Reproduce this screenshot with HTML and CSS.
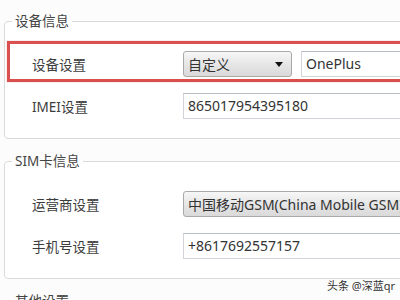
FILE: index.html
```html
<!DOCTYPE html>
<html lang="zh-CN">
<head>
  <meta charset="UTF-8">
  <title>设备信息</title>
  <link rel="stylesheet" href="styles.css">
</head>
<body>

  <div class="panel">
    <fieldset class="group">
      <legend>设备信息</legend>
      <div class="row marked">
        <label>设备设置</label>
        <div class="combo short"><span>自定义</span><i class="arrow"></i></div>
        <div class="field model">OnePlus</div>
      </div>
      <div class="row">
        <label>IMEI设置</label>
        <div class="field wide">865017954395180</div>
      </div>
    </fieldset>

    <fieldset class="group">
      <legend>SIM卡信息</legend>
      <div class="row">
        <label>运营商设置</label>
        <div class="combo wide"><span>中国移动GSM(China Mobile GSM)</span><i class="arrow"></i></div>
      </div>
      <div class="row">
        <label>手机号设置</label>
        <div class="field wide">+8617692557157</div>
      </div>
    </fieldset>

    <fieldset class="group">
      <legend>其他设置</legend>
      <div class="row">
        <label>其他</label>
      </div>
    </fieldset>
  </div>

  <!-- watermark over the screenshot -->
  <div class="watermark">头条 @深蓝qr</div>

</body>
</html>
```

FILE: styles.css
```css
body {
  margin: 0;
  width: 400px;
  height: 300px;
  overflow: hidden;
  background-color: #fcfcfc;
  font-family: "Noto Sans", "Noto Sans CJK SC", sans-serif;
  color: #3a3a3a;
  position: relative;
}
.panel {
  width: 470px;
  padding-left: 4px;
}
.group {
  margin: 12px 0 0 0;
  padding: 21px 0 19px 0;
  border: 1px solid #dadada;
  border-radius: 4px;
  background: #fff;
  display: flex;
  flex-direction: column;
  gap: 16px;
}
.group + .group {
  margin-top: 13px;
}
.group legend {
  margin-left: 7px;
  padding: 0 3px;
  font-size: 13.5px;
  line-height: 18px;
  color: #444;
}
.row {
  display: flex;
  align-items: center;
  height: 26px;
  padding-left: 27px;
}
.row label {
  width: 151px;
  font-size: 13.5px;
  color: #3c3c3c;
}
.field {
  box-sizing: border-box;
  height: 26px;
  border: 1px solid #d0d3d8;
  border-top-color: #b9bec6;
  background: #fff;
  padding-left: 4px;
  font-size: 14px;
  line-height: 24px;
  color: #333;
  white-space: nowrap;
}
.combo {
  box-sizing: border-box;
  height: 26px;
  display: flex;
  align-items: center;
  justify-content: space-between;
  border: 1px solid #a9a9a9;
  border-radius: 3px;
  background: linear-gradient(#f7f7f7, #e6e6e6 50%, #dadada);
  padding: 0 8px 0 4px;
  font-size: 14px;
  color: #333;
  white-space: nowrap;
  overflow: hidden;
}
.short {
  width: 109px;
}
.model {
  width: 160px;
  margin-left: 9px;
}
.wide {
  width: 250px;
}
.arrow {
  width: 0;
  height: 0;
  border-left: 4px solid transparent;
  border-right: 4px solid transparent;
  border-top: 5px solid #111;
  flex-shrink: 0;
}
/* hand-drawn red annotation box */
.marked {
  position: relative;
}
.marked::after {
  content: "";
  position: absolute;
  left: 2px;
  right: -30px;
  top: -10px;
  bottom: -5px;
  border: 3px solid #d9504f;
  box-shadow: 0 0 1px rgba(217, 80, 79, 0.6);
}
.watermark {
  position: absolute;
  left: 327px;
  top: 278px;
  font-size: 11px;
  line-height: 15px;
  color: #333;
  white-space: nowrap;
  text-shadow: 0 0 2px #fff;
}
```
